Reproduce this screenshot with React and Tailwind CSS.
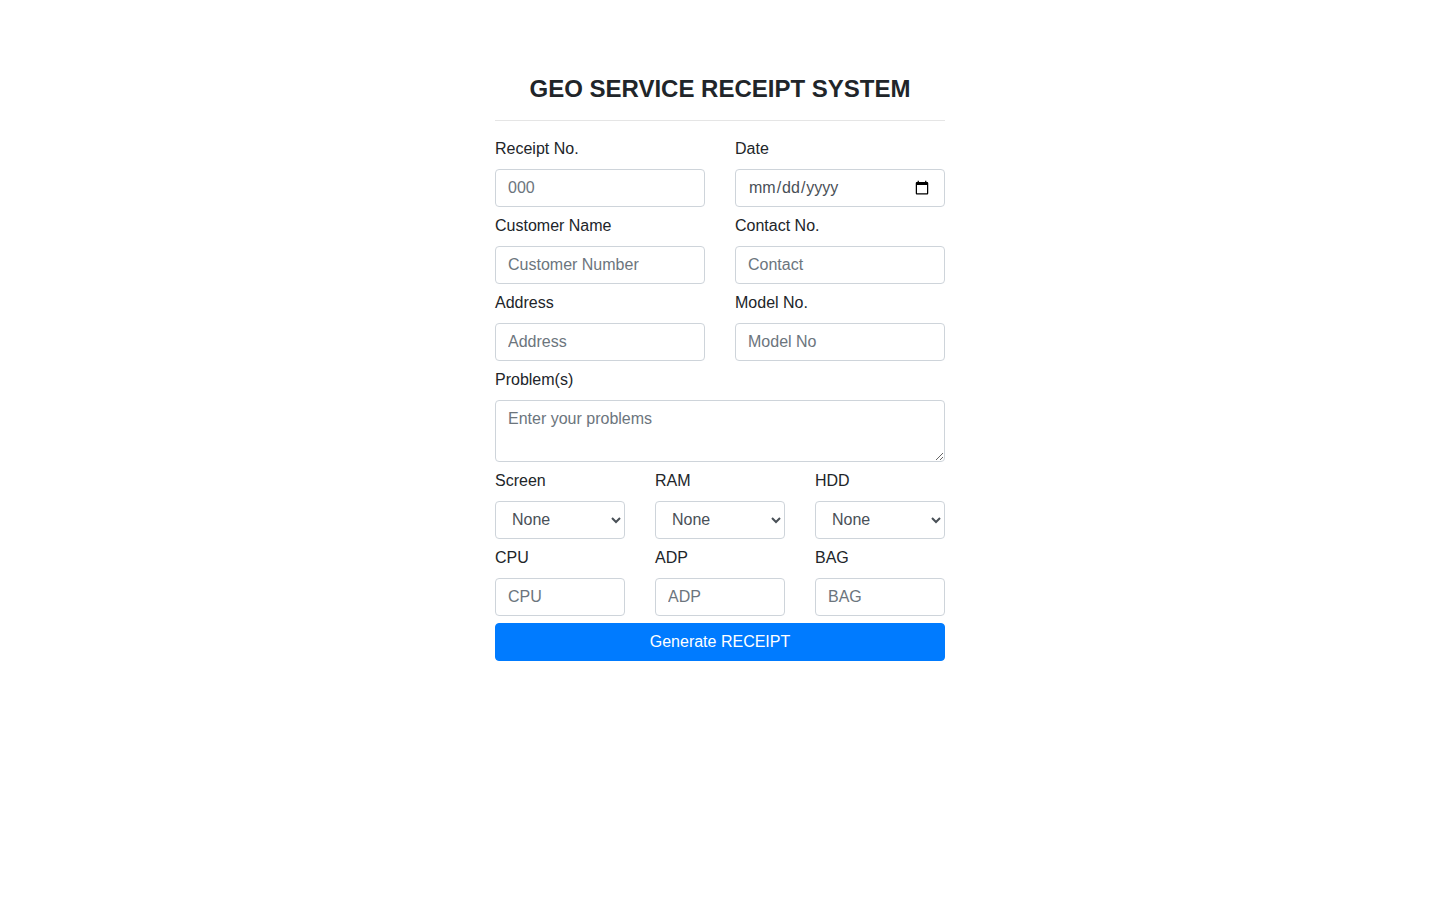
import { useState } from 'react';

const inputCls =
  'block w-full h-[38px] px-3 py-[6px] text-base leading-6 text-[#495057] bg-white border border-[#ced4da] rounded-[4px] placeholder:text-[#6c757d] outline-none';

const Field = ({ label, children }) => (
  <div>
    <label className="block mb-2 leading-6 text-base">{label}</label>
    {children}
  </div>
);

const SelectBox = () => (
  <select className={inputCls} defaultValue="None">
    <option>None</option>
    <option>Yes</option>
  </select>
);

export default function App() {
  const [form, setForm] = useState({});
  const set = (k) => (e) => setForm({ ...form, [k]: e.target.value });

  return (
    <div className="min-h-screen bg-white text-[#212529] font-['Liberation_Sans',Arial,sans-serif]">
      <div className="w-[450px] mx-auto pt-[75px]">
        <h4 className="text-2xl font-bold leading-[1.2] text-center">GEO SERVICE RECEIPT SYSTEM</h4>
        <hr className="mt-4 mb-4 border-0 border-t border-[#e5e5e5]" />

        {/* rows of two */}
        <div className="grid grid-cols-2 gap-x-[30px]">
          <Field label="Receipt No.">
            <input className={inputCls} placeholder="000" value={form.no || ''} onChange={set('no')} />
          </Field>
          <Field label="Date">
            <input type="date" className={inputCls} />
          </Field>
        </div>
        <div className="grid grid-cols-2 gap-x-[30px] mt-[7px]">
          <Field label="Customer Name">
            <input className={inputCls} placeholder="Customer Number" />
          </Field>
          <Field label="Contact No.">
            <input className={inputCls} placeholder="Contact" />
          </Field>
        </div>
        <div className="grid grid-cols-2 gap-x-[30px] mt-[7px]">
          <Field label="Address">
            <input className={inputCls} placeholder="Address" />
          </Field>
          <Field label="Model No.">
            <input className={inputCls} placeholder="Model No" />
          </Field>
        </div>

        <div className="mt-[7px]">
          <label className="block mb-2 leading-6">Problem(s)</label>
          <textarea
            rows={2}
            className="block w-full h-[62px] px-3 py-[6px] text-base leading-6 text-[#495057] bg-white border border-[#ced4da] rounded-[4px] placeholder:text-[#6c757d] outline-none"
            placeholder="Enter your problems"
          />
        </div>

        {/* rows of three */}
        <div className="grid grid-cols-3 gap-x-[30px] mt-[7px]">
          <Field label="Screen"><SelectBox /></Field>
          <Field label="RAM"><SelectBox /></Field>
          <Field label="HDD"><SelectBox /></Field>
        </div>
        <div className="grid grid-cols-3 gap-x-[30px] mt-[7px]">
          <Field label="CPU">
            <input className={inputCls} placeholder="CPU" />
          </Field>
          <Field label="ADP">
            <input className={inputCls} placeholder="ADP" />
          </Field>
          <Field label="BAG">
            <input className={inputCls} placeholder="BAG" />
          </Field>
        </div>

        <button className="mt-[7px] block w-full h-[38px] bg-[#007bff] text-white text-base leading-6 rounded-[4px] border border-[#007bff]">
          Generate RECEIPT
        </button>
      </div>
    </div>
  );
}
